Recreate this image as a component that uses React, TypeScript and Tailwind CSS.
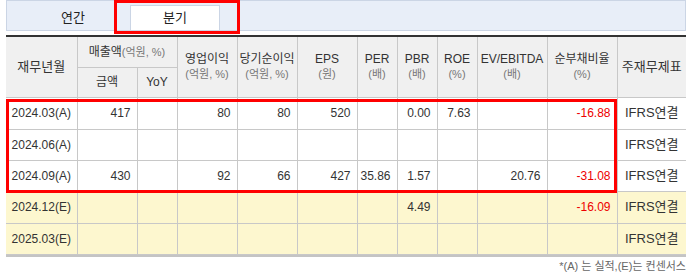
import React from "react";

type Row = {
  date: string;
  h: string;
  est?: boolean;
  sales?: string;
  yoy?: string;
  op?: string;
  net?: string;
  eps?: string;
  per?: string;
  pbr?: string;
  roe?: string;
  ev?: string;
  debt?: string;
};

const rows: Row[] = [
  { date: "2024.03(A)", h: "h-[32px]", sales: "417", op: "80", net: "80", eps: "520", pbr: "0.00", roe: "7.63", debt: "-16.88" },
  { date: "2024.06(A)", h: "h-[31px]" },
  { date: "2024.09(A)", h: "h-[31px]", sales: "430", op: "92", net: "66", eps: "427", per: "35.86", pbr: "1.57", ev: "20.76", debt: "-31.08" },
  { date: "2024.12(E)", h: "h-[32px]", est: true, pbr: "4.49", debt: "-16.09" },
  { date: "2025.03(E)", h: "h-[31px]", est: true },
];

const widths = [71, 60, 40, 60, 60, 60, 40, 40, 40, 70, 70, 69];

function Unit({ children }: { children: React.ReactNode }) {
  return <span className="text-[11px] text-[#777]">{children}</span>;
}

function HeadCell({ title, unit }: { title: string; unit: string }) {
  return (
    <th rowSpan={2} className="border border-[#c8c8c8] font-normal leading-[15px]">
      <div className="text-[12px] text-[#333]">{title}</div>
      <Unit>{unit}</Unit>
    </th>
  );
}

function Num({ v, red }: { v?: string; red?: boolean }) {
  return (
    <td className={`border border-[#c8c8c8] pr-[6px] text-right ${red ? "text-[#ee0000]" : "text-[#333]"}`}>
      {v ?? ""}
    </td>
  );
}

export default function App() {
  return (
    <div
      className="relative w-[692px] h-[274px] bg-white px-[6px]"
      style={{ fontFamily: '"Liberation Sans", "Noto Sans CJK KR", sans-serif' }}
    >
      {/* tabs */}
      <div className="flex h-[31px] items-end border border-[#cbd5e5] bg-[#e8eef8] pl-[11px]">
        <div className="flex h-[24px] w-[110px] items-center justify-center text-[13px] text-[#222]">연간</div>
        <div className="ml-[2px] flex h-[25px] w-[90px] items-center justify-center border border-b-0 border-[#cbd5e5] bg-white text-[13px] text-[#222]">
          분기
        </div>
      </div>

      <table className="mt-[4px] w-[680px] table-fixed border-collapse border-t-2 border-t-[#333] text-[12px]">
        <colgroup>
          {widths.map((w, i) => (
            <col key={i} style={{ width: w }} />
          ))}
        </colgroup>
        <thead className="bg-[#f0f0f0] text-[#333]">
          <tr className="h-[31px]">
            <th rowSpan={2} className="border border-l-0 border-[#c8c8c8] text-[13px] font-normal">
              재무년월
            </th>
            <th colSpan={2} className="border border-[#c8c8c8] text-[12px] font-normal">
              매출액<Unit>(억원, %)</Unit>
            </th>
            <HeadCell title="영업이익" unit="(억원, %)" />
            <HeadCell title="당기순이익" unit="(억원, %)" />
            <HeadCell title="EPS" unit="(원)" />
            <HeadCell title="PER" unit="(배)" />
            <HeadCell title="PBR" unit="(배)" />
            <HeadCell title="ROE" unit="(%)" />
            <HeadCell title="EV/EBITDA" unit="(배)" />
            <HeadCell title="순부채비율" unit="(%)" />
            <th rowSpan={2} className="border border-r-0 border-[#c8c8c8] text-[13px] font-normal">
              주재무제표
            </th>
          </tr>
          <tr className="h-[30px]">
            <th className="border border-[#c8c8c8] text-[12px] font-normal">금액</th>
            <th className="border border-[#c8c8c8] text-[12px] font-normal">YoY</th>
          </tr>
        </thead>
        <tbody>
          {rows.map((r) => (
            <tr key={r.date} className={`${r.h} ${r.est ? "bg-[#fdf7cf]" : "bg-white"}`}>
              <td className="border border-l-0 border-[#c8c8c8] text-center text-[#333]">{r.date}</td>
              <Num v={r.sales} />
              <Num v={r.yoy} />
              <Num v={r.op} />
              <Num v={r.net} />
              <Num v={r.eps} />
              <Num v={r.per} />
              <Num v={r.pbr} />
              <Num v={r.roe} />
              <Num v={r.ev} />
              <Num v={r.debt} red />
              <td className="border border-r-0 border-[#c8c8c8] text-center text-[13px] text-[#333]">IFRS연결</td>
            </tr>
          ))}
        </tbody>
      </table>
      <div className="h-[2px] w-[680px] bg-[#c4c4c4]" />
      <div className="mt-[1px] text-right text-[11px] text-[#666]">*(A) 는 실적,(E)는 컨센서스</div>

      {/* highlight boxes */}
      <div className="absolute left-[114px] top-0 h-[34px] w-[126px] border-[3px] border-[#ff0000]" />
      <div className="absolute left-[6px] top-[99px] h-[94px] w-[611px] border-[3px] border-[#ff0000]" />
    </div>
  );
}
